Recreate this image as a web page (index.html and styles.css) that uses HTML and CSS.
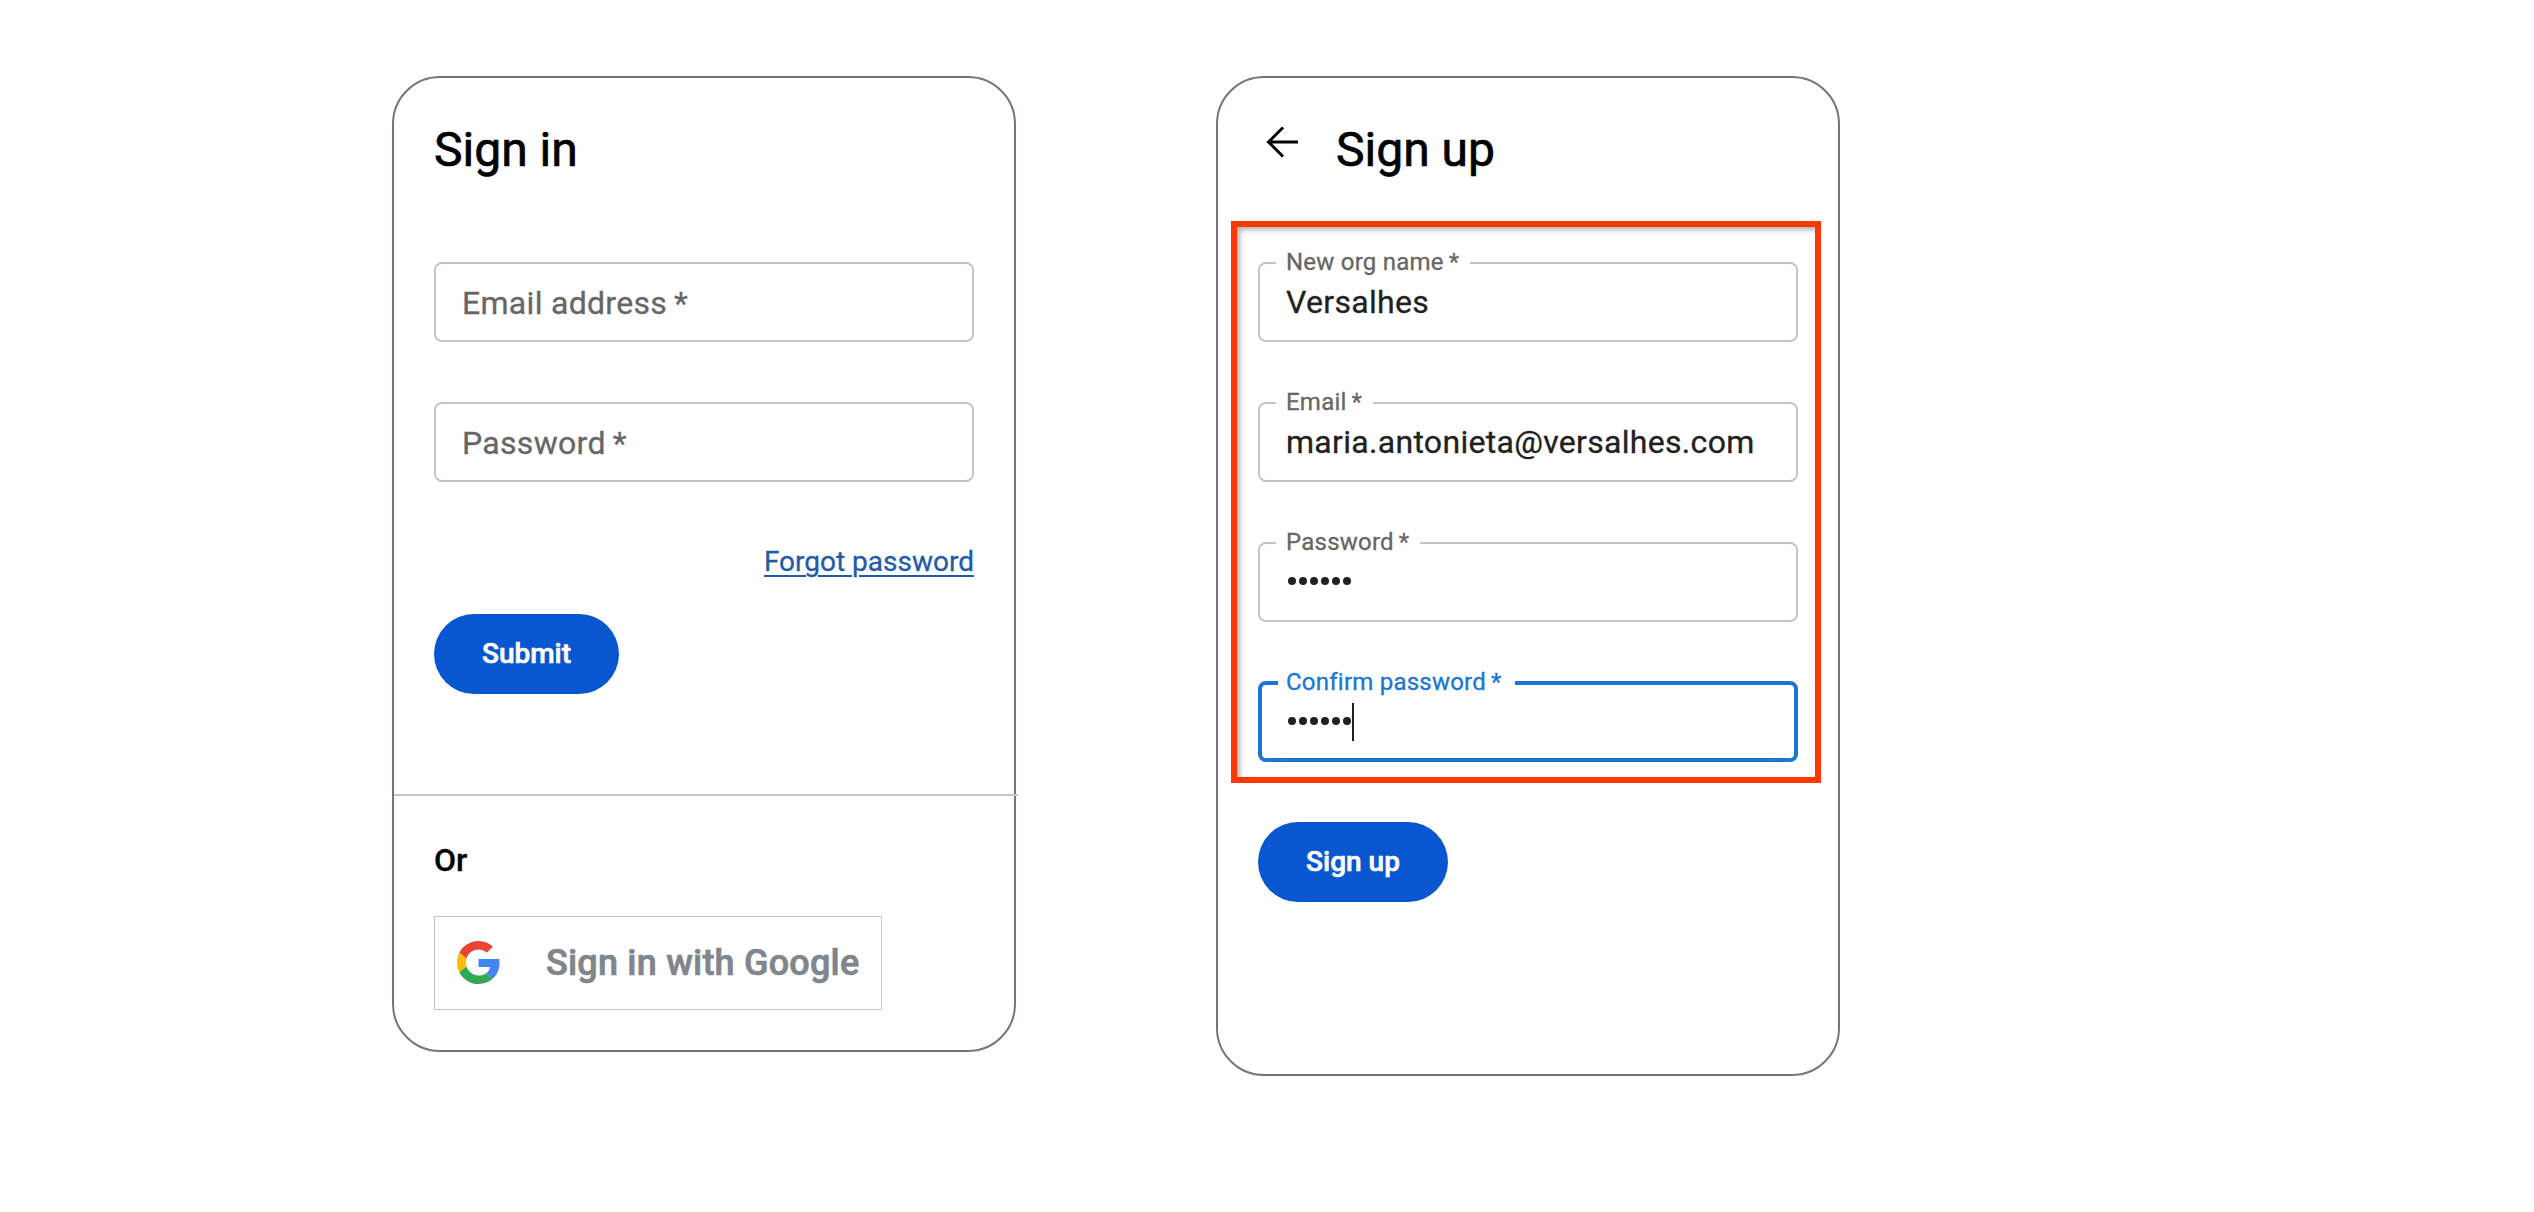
FILE: index.html
```html
<!DOCTYPE html>
<html lang="en">
<head>
<meta charset="utf-8">
<title>Sign in</title>
<link rel="stylesheet" href="styles.css">
</head>
<body>
<main class="page">
  <section class="card">
    <h1 class="title">Sign in</h1>
    <div class="fields">
      <div class="field placeholder">Email address<span class="star">*</span></div>
      <div class="field placeholder">Password<span class="star">*</span></div>
    </div>
    <a class="forgot">Forgot password</a>
    <button class="btn submit">Submit</button>
    <div class="divider"></div>
    <h2 class="or">Or</h2>
    <button class="google">
      <svg class="logo" viewBox="0 0 48 48" width="43" height="43"><path fill="#EA4335" d="M24 9.5c3.54 0 6.71 1.22 9.21 3.6l6.85-6.85C35.9 2.38 30.47 0 24 0 14.62 0 6.51 5.38 2.56 13.22l7.98 6.19C12.43 13.72 17.74 9.5 24 9.5z"/><path fill="#4285F4" d="M47.5 24.55c0-1.57-.15-3.09-.38-4.55H24v9.02h12.94c-.58 2.96-2.26 5.48-4.78 7.18l7.73 6c4.51-4.18 7.61-10.36 7.61-17.65z"/><path fill="#FBBC05" d="M10.53 28.59c-.48-1.45-.76-2.99-.76-4.59s.27-3.14.76-4.59l-7.98-6.19C.92 16.46 0 20.12 0 24c0 3.88.92 7.54 2.56 10.78l7.97-6.19z"/><path fill="#34A853" d="M24 48c6.48 0 11.93-2.13 15.89-5.81l-7.73-6c-2.15 1.45-4.92 2.3-8.16 2.3-6.26 0-11.57-4.22-13.47-9.91l-7.98 6.19C6.51 42.62 14.62 48 24 48z"/></svg>
      <span>Sign in with Google</span>
    </button>
  </section>
  <section class="card card-up">
    <header class="head">
      <svg class="back" viewBox="0 0 34 34" width="34" height="34"><path d="M33 17H4M18 2.5 3.5 17 18 31.5" fill="none" stroke="#000" stroke-width="3"/></svg>
      <h1 class="title">Sign up</h1>
    </header>
    <div class="highlight">
      <div class="fields">
        <fieldset class="field"><legend>New org name<span class="star">*</span></legend><div class="value">Versalhes</div></fieldset>
        <fieldset class="field"><legend>Email<span class="star">*</span></legend><div class="value">maria.antonieta@versalhes.com</div></fieldset>
        <fieldset class="field"><legend>Password<span class="star">*</span></legend><div class="value dots"><i></i><i></i><i></i><i></i><i></i><i></i></div></fieldset>
        <fieldset class="field focused"><legend>Confirm password<span class="star">*</span></legend><div class="value dots"><i></i><i></i><i></i><i></i><i></i><i></i><b class="caret"></b></div></fieldset>
      </div>
    </div>
    <button class="btn signup">Sign up</button>
  </section>
</main>
</body>
</html>
```
FILE: styles.css
```css
* { box-sizing: border-box; }
body { margin: 0; background: #fff; color: #000; font-family: Roboto, "Liberation Sans", sans-serif; -webkit-text-stroke: 0.3px currentColor; }
.page { display: flex; align-items: flex-start; gap: 200px; padding: 76px 0 0 392px; }
.card { display: flex; flex-direction: column; align-items: flex-start; width: 624px; height: 976px; padding: 40px 40px 0; border: 2px solid #73747f; border-radius: 48px; }
.card-up { height: 1000px; }
.title { margin: 0; height: 64px; font-size: 48px; font-weight: 400; line-height: 64px; -webkit-text-stroke: 0.7px #000; }
.fields { display: flex; flex-direction: column; gap: 60px; width: 540px; }
.card > .fields { margin-top: 80px; }
.field { height: 80px; margin: 0; border: 2px solid #c4c4c4; border-radius: 8px; }
.placeholder { padding-left: 26px; color: #666; font-size: 32px; line-height: 78px; letter-spacing: 0.3px; }
.star { margin-left: 7px; }
.forgot { align-self: flex-end; margin-top: 60px; height: 40px; color: #1e5ca8; font-size: 28px; line-height: 40px; text-decoration: underline; text-decoration-thickness: 2px; text-underline-offset: 4px; }
.btn { height: 80px; padding: 0; border: 0; border-radius: 40px; background: #0957d0; color: #fff; font: 500 28px/80px Roboto, sans-serif; -webkit-text-stroke: 0.6px currentColor; }
.submit { width: 185px; margin-top: 32px; }
.divider { width: 624px; height: 2px; margin: 100px 0 0 -40px; background: #c5c5d1; }
.or { margin: 44px 0 0; font-size: 32px; font-weight: 500; line-height: 40px; }
.google { display: flex; align-items: center; width: 448px; height: 94px; margin-top: 36px; padding: 0 0 0 22px; border: 1px solid #c5c5d1; background: #fff; color: #80868b; font: 500 36px/48px Roboto, sans-serif; letter-spacing: 0.2px; white-space: nowrap; -webkit-text-stroke: 0.7px currentColor; }
.logo { flex: none; margin: 0 46px 1px 0; }
.head { display: flex; gap: 37px; height: 64px; padding-left: 7px; }
.back { margin-top: 7px; }
.highlight { width: 590px; height: 562px; margin: 39px 0 0 -27px; padding: 35px 21px 0; border: 6px solid #ff3700; box-shadow: inset 3px 3px 5px rgba(0, 0, 0, 0.3); }
fieldset.field { height: 96px; margin-top: -16px; padding: 0 26px; color: #212121; }
legend { height: 34px; margin-left: -10px; padding: 0 11px 0 10px; color: #666; font-size: 24px; line-height: 32px; letter-spacing: 0.23px; }
legend .star { margin-left: 5px; }
.value { height: 38px; margin-top: 3px; font-size: 32px; line-height: 38px; letter-spacing: 0.3px; }
.dots { display: flex; align-items: center; gap: 3.1px; padding-left: 1.5px; }
.dots i { flex: none; width: 8px; height: 8px; margin-bottom: 2px; border-radius: 50%; background: #212121; }
.caret { width: 2px; height: 38px; margin-left: -2px; background: #212121; }
fieldset.focused { padding: 0 24px; border: 4px solid #1976d2; }
.focused legend { margin-left: -8px; padding: 0 13px 0 8px; color: #1976d2; }
.signup { width: 190px; margin-top: 39px; }
```
